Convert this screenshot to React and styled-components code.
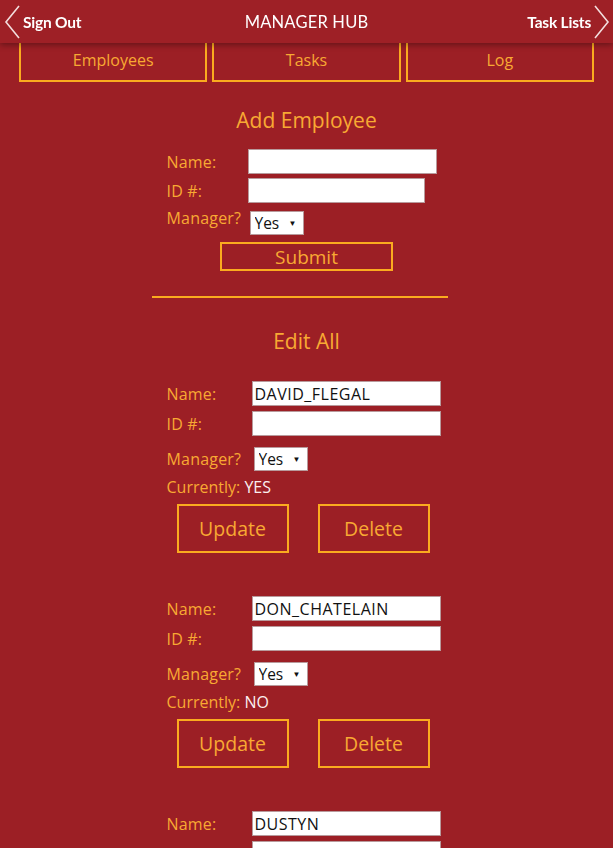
import styled, { createGlobalStyle } from 'styled-components';

const RED = '#9c1f25';
const ORANGE = '#fbab1f';
const TEXT_ORANGE = '#f8a933';
const BODY_FONT = '"Open Sans", Lato, sans-serif';

const GlobalStyle = createGlobalStyle`
  body {
    margin: 0;
    background: ${RED};
    font-family: ${BODY_FONT};
  }
`;

const Header = styled.header`
  position: fixed;
  top: 0;
  left: 0;
  right: 0;
  height: 43px;
  background: #9e2026;
  box-shadow: 0 2px 6px rgba(0, 0, 0, 0.35);
  display: grid;
  grid-template-columns: 1fr auto 1fr;
  align-items: center;
  color: #fff;
  font-family: Lato, sans-serif;
  z-index: 10;
`;

const HeaderLink = styled.div`
  display: flex;
  align-items: center;
  justify-content: ${({ $right }) => ($right ? 'flex-end' : 'flex-start')};
  gap: 2px;
  font-weight: 700;
  font-size: 15.5px;
  letter-spacing: -0.2px;
  padding: ${({ $right }) => ($right ? '0 3px 0 0' : '0 0 0 4px')};
`;

const Title = styled.div`
  font-size: 16.5px;
  letter-spacing: 0.2px;
`;

const Chevron = ({ dir }) => (
  <svg width="17" height="34" viewBox="0 0 17 34">
    <polyline
      points={dir === 'left' ? '15,1 2,17 15,33' : '2,1 15,17 2,33'}
      fill="none"
      stroke="#f3dede"
      strokeWidth="1.6"
    />
  </svg>
);

const Nav = styled.nav`
  display: grid;
  grid-template-columns: repeat(3, 1fr);
  gap: 5px;
  padding: 38px 19px 0;
`;

const NavButton = styled.div`
  height: 40px;
  border: 2px solid ${ORANGE};
  display: flex;
  align-items: center;
  justify-content: center;
  color: ${TEXT_ORANGE};
  font-size: 16px;
`;

const Heading = styled.h2`
  margin: ${({ $top }) => $top}px 0 0;
  text-align: center;
  font-weight: 400;
  font-size: 21px;
  line-height: 26px;
  color: ${TEXT_ORANGE};
`;

const Form = styled.div`
  width: 280px;
  margin: ${({ $top }) => $top}px auto 0;
  display: flex;
  flex-direction: column;
`;

const Row = styled.div`
  display: grid;
  grid-template-columns: ${({ $label }) => $label}px auto;
  align-items: ${({ $top }) => ($top ? 'start' : 'center')};
  margin-top: ${({ $gap }) => $gap || 0}px;
`;

const Label = styled.label`
  color: ${TEXT_ORANGE};
  font-size: 16px;
  letter-spacing: 0.2px;
  line-height: 18px;
  margin-top: ${({ $shift }) => $shift || 0}px;
`;

const TextInput = styled.input`
  box-sizing: border-box;
  width: ${({ $w }) => $w}px;
  height: 25px;
  border: 1px solid #b89a9c;
  background: #fff;
  padding: 0 2px;
  font-family: ${BODY_FONT};
  font-size: 16px;
  letter-spacing: 0.5px;
  color: #111;
  outline: none;
`;

const SelectWrap = styled.span`
  position: relative;
  display: inline-block;
  width: 54px;
  height: 24px;
  margin-left: 2px;
`;

const Select = styled.select`
  appearance: none;
  box-sizing: border-box;
  width: 100%;
  height: 100%;
  border: 1px solid #b89a9c;
  background: #fff;
  padding: 0 0 0 4px;
  font-family: ${BODY_FONT};
  font-size: 15.5px;
  color: #111;
  border-radius: 0;
`;

const Arrow = styled.span`
  position: absolute;
  right: 7px;
  top: 8px;
  font-size: 8px;
  line-height: 8px;
  color: #111;
  pointer-events: none;
`;

const OutlineButton = styled.div`
  box-sizing: border-box;
  width: ${({ $w }) => $w}px;
  height: ${({ $h }) => $h}px;
  border: 2px solid ${ORANGE};
  display: flex;
  align-items: center;
  justify-content: center;
  color: ${TEXT_ORANGE};
  font-size: ${({ $fs }) => $fs}px;
`;

const SubmitRow = styled.div`
  display: flex;
  justify-content: center;
  margin-top: 7px;
`;

const Divider = styled.hr`
  width: 296px;
  margin: 25px 0 0 152px;
  border: none;
  border-top: 2px solid ${ORANGE};
`;

const Item = styled.div`
  width: 280px;
  margin: ${({ $top }) => $top}px auto 0;
`;

const Current = styled.div`
  margin-top: 7px;
  font-size: 16px;
  line-height: 18px;
  color: ${TEXT_ORANGE};

  b {
    color: #fbefef;
    font-weight: 500;
  }
`;

const Actions = styled.div`
  display: flex;
  gap: 29px;
  margin: 8px 0 0 10px;
`;

const ManagerSelect = () => (
  <SelectWrap>
    <Select defaultValue="Yes">
      <option>Yes</option>
      <option>No</option>
    </Select>
    <Arrow>▼</Arrow>
  </SelectWrap>
);

const employees = [
  { name: 'DAVID_FLEGAL', current: 'YES' },
  { name: 'DON_CHATELAIN', current: 'NO' },
  { name: 'DUSTYN', current: 'NO' },
];

const App = () => (
  <>
    <GlobalStyle />
    <Header>
      <HeaderLink>
        <Chevron dir="left" />
        Sign Out
      </HeaderLink>
      <Title>MANAGER HUB</Title>
      <HeaderLink $right>
        Task Lists
        <Chevron dir="right" />
      </HeaderLink>
    </Header>

    <Nav>
      <NavButton>Employees</NavButton>
      <NavButton>Tasks</NavButton>
      <NavButton>Log</NavButton>
    </Nav>

    <Heading $top={25}>Add Employee</Heading>
    <Form $top={16}>
      <Row $label={81}>
        <Label>Name:</Label>
        <TextInput $w={189} />
      </Row>
      <Row $label={81} $gap={4}>
        <Label>ID #:</Label>
        <TextInput $w={177} />
      </Row>
      <Row $label={81} $gap={8} $top>
        <Label $shift={-2}>Manager?</Label>
        <ManagerSelect />
      </Row>
    </Form>
    <SubmitRow>
      <OutlineButton $w={173} $h={29} $fs={19}>Submit</OutlineButton>
    </SubmitRow>

    <Divider />

    <Heading $top={30}>Edit All</Heading>

    {employees.map((emp, i) => (
      <Item key={emp.name} $top={i === 0 ? 27 : 43}>
        <Row $label={85}>
          <Label>Name:</Label>
          <TextInput $w={189} defaultValue={emp.name} />
        </Row>
        <Row $label={85} $gap={5}>
          <Label>ID #:</Label>
          <TextInput $w={189} />
        </Row>
        <Row $label={85} $gap={11}>
          <Label>Manager?</Label>
          <ManagerSelect />
        </Row>
        <Current>
          Currently: <b>{emp.current}</b>
        </Current>
        <Actions>
          <OutlineButton $w={112} $h={49} $fs={19.5}>Update</OutlineButton>
          <OutlineButton $w={112} $h={49} $fs={19.5}>Delete</OutlineButton>
        </Actions>
      </Item>
    ))}
  </>
);

export default App;
